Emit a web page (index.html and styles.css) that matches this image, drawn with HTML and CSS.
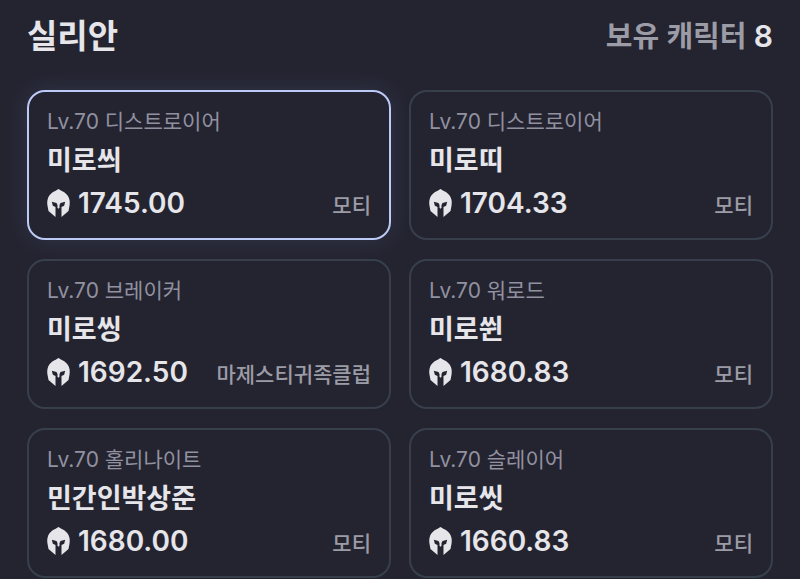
FILE: index.html
```html
<!DOCTYPE html>
<html lang="ko">
<head>
    <meta charset="UTF-8">
    <meta name="viewport" content="width=device-width, initial-scale=1.0">
    <title>실리안</title>
    <link rel="stylesheet" href="styles.css">
</head>
<body>

<!-- Helmet icon, reused by every card -->
<svg class="sprite" aria-hidden="true">
    <symbol id="helmet" viewBox="0 0 68 84">
        <path d="M34 0 C25 7 5 11 1 33 C0 38 0 45 1 50 L4 66 L25 84 V54 L17 50 L14 38 L28 42 L31 48 V56 L34 59 L37 56 V48 L40 42 L54 38 L51 50 L43 54 V84 L64 66 L67 50 C68 45 68 38 67 33 C63 11 43 7 34 0 Z"/>
    </symbol>
</svg>

<div class="container">
    <header class="header">
        <h1>실리안</h1>
        <p class="count">보유 캐릭터 <strong>8</strong></p>
    </header>

    <div class="card-grid">
        <a class="card active" href="#">
            <span class="job">Lv.70 디스트로이어</span>
            <span class="name">미로씌</span>
            <span class="bottom">
                <svg class="icon"><use href="#helmet"/></svg>
                <span class="level">1745.00</span>
                <span class="guild">모티</span>
            </span>
        </a>
        <a class="card" href="#">
            <span class="job">Lv.70 디스트로이어</span>
            <span class="name">미로띠</span>
            <span class="bottom">
                <svg class="icon"><use href="#helmet"/></svg>
                <span class="level">1704.33</span>
                <span class="guild">모티</span>
            </span>
        </a>
        <a class="card" href="#">
            <span class="job">Lv.70 브레이커</span>
            <span class="name">미로씽</span>
            <span class="bottom">
                <svg class="icon"><use href="#helmet"/></svg>
                <span class="level">1692.50</span>
                <span class="guild">마제스티귀족클럽</span>
            </span>
        </a>
        <a class="card" href="#">
            <span class="job">Lv.70 워로드</span>
            <span class="name">미로쒼</span>
            <span class="bottom">
                <svg class="icon"><use href="#helmet"/></svg>
                <span class="level">1680.83</span>
                <span class="guild">모티</span>
            </span>
        </a>
        <a class="card" href="#">
            <span class="job">Lv.70 홀리나이트</span>
            <span class="name">민간인박상준</span>
            <span class="bottom">
                <svg class="icon"><use href="#helmet"/></svg>
                <span class="level">1680.00</span>
                <span class="guild">모티</span>
            </span>
        </a>
        <a class="card" href="#">
            <span class="job">Lv.70 슬레이어</span>
            <span class="name">미로씻</span>
            <span class="bottom">
                <svg class="icon"><use href="#helmet"/></svg>
                <span class="level">1660.83</span>
                <span class="guild">모티</span>
            </span>
        </a>
    </div>
</div>

</body>
</html>
```
FILE: styles.css
```css
* {
    box-sizing: border-box;
}

body {
    margin: 0;
    background-color: #242431;
    color: #e6e6ea;
    font-family: Inter, 'Noto Sans CJK KR', sans-serif;
}

.sprite {
    position: absolute;
    width: 0;
    height: 0;
}

.container {
    padding: 14px 27px 0;
}

.header {
    display: flex;
    align-items: center;
    justify-content: space-between;
    height: 44px;
    margin-bottom: 32px;
}

h1 {
    margin: 0;
    font-size: 33px;
    line-height: 44px;
    font-weight: 600;
}

.count {
    margin: 0;
    color: #9c9ca6;
    font-size: 29px;
    line-height: 44px;
    font-weight: 600;
}

.count strong {
    color: #e6e6ea;
    font-size: 30px;
    font-weight: 600;
}

.card-grid {
    display: grid;
    grid-template-columns: 1fr 1fr;
    gap: 19px 18px;
}

.card {
    display: flex;
    flex-direction: column;
    gap: 9px;
    min-width: 0;
    padding: 18px 18px 20px;
    border: 2px solid #373f4d;
    border-radius: 18px;
    color: inherit;
    text-decoration: none;
}

.card.active {
    border-color: #bccaf6;
    box-shadow: 0 0 24px rgba(160, 185, 246, 0.12);
}

.job {
    color: #9191a0;
    font-size: 21px;
    line-height: 24px;
}

.name {
    font-size: 27px;
    line-height: 36px;
    font-weight: 600;
}

.bottom {
    display: flex;
    align-items: flex-end;
}

.icon {
    align-self: center;
    width: 23px;
    height: 28px;
    margin-right: 8px;
    fill: #e6e6ea;
}

.level {
    font-size: 28px;
    line-height: 30px;
    font-weight: 600;
}

.guild {
    margin-left: auto;
    color: #9c9ca6;
    font-size: 21px;
    line-height: 24px;
    font-weight: 500;
}
```
